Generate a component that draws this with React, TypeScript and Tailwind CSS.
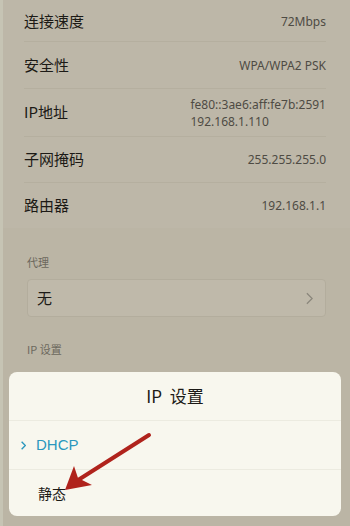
const font = { fontFamily: '"Noto Sans CJK SC", "Noto Sans", sans-serif' };
const latin = { fontFamily: '"Noto Sans", "Noto Sans CJK SC", sans-serif' };

/* ── Info rows ─────────────────────────────────────────────── */
const rows = [
  { label: "连接速度", value: ["72Mbps"], h: "h-[42px]" },
  { label: "安全性", value: ["WPA/WPA2 PSK"], h: "h-[47px]" },
  { label: "IP地址", value: ["fe80::3ae6:aff:fe7b:2591", "192.168.1.110"], h: "h-[48px]" },
  { label: "子网掩码", value: ["255.255.255.0"], h: "h-[46px]" },
  { label: "路由器", value: ["192.168.1.1"], h: "h-[45px]" },
];

function Chevron({ className, width = 1.4 }: { className?: string; width?: number }) {
  return (
    <svg viewBox="0 0 8 14" className={className} fill="none" stroke="currentColor" strokeWidth={width}>
      <path d="M1 1l6 6-6 6" />
    </svg>
  );
}

export default function App() {
  return (
    <div
      className="relative h-[526px] w-[350px] overflow-hidden border-l-[3px] border-[#c6c4b4] bg-[#bbb5a5]"
      style={font}
    >
      {/* info list */}
      <div className="bg-[#bdb7a8] pl-[21px] pr-[24px]">
        {rows.map((r, i) => (
          <div
            key={r.label}
            className={`flex items-center justify-between ${r.h} ${
              i < rows.length - 1 ? "border-b border-[#b5af9f]" : ""
            } ${i === 0 ? "pt-[1px]" : ""}`}
          >
            <span className="text-[15px] text-[#1c1a16]">{r.label}</span>
            <div className="text-right text-[12px] leading-[17px] text-[#4e4b44]" style={latin}>
              {r.value.length > 1 ? (
                r.value.map((v) => (
                  <div key={v} className="text-left">
                    {v}
                  </div>
                ))
              ) : (
                <span>{r.value[0]}</span>
              )}
            </div>
          </div>
        ))}
      </div>

      {/* proxy section */}
      <div className="px-[24px] pt-[26px]">
        <div className="text-[11px] leading-[16px] text-[#6c685d]">代理</div>
        <div className="mt-[9px] flex h-[38px] items-center justify-between rounded-[4px] border border-[#b3ad9d] bg-[#bfb9aa] pl-[9px] pr-[12px]">
          <span className="text-[15px] text-[#1c1a16]">无</span>
          <Chevron className="h-[13px] w-[7px] text-[#8a867b]" />
        </div>
        <div className="mt-[24px] text-[11px] leading-[16px] text-[#6c685d]">IP 设置</div>
      </div>

      {/* bottom sheet */}
      <div className="absolute left-[6px] top-[372px] h-[144px] w-[332px] rounded-[8px] bg-[#f8f7ee]">
        <div className="flex h-[49px] items-center justify-center border-b border-[#ecebe0] text-[17px] text-[#1c1a16]">
          IP&nbsp;&nbsp;设置
        </div>
        <div className="flex h-[49px] items-center border-b border-[#ecebe0] pl-[12px]">
          <Chevron className="h-[9px] w-[5px] text-[#2a97bd]" width={2.2} />
          <span className="ml-[10px] text-[15px] text-[#2a97bd]" style={{ fontFamily: '"Liberation Sans", sans-serif' }}>
            DHCP
          </span>
        </div>
        <div className="flex h-[46px] items-center pl-[29px] text-[14px] text-[#1c1a16]">静态</div>
      </div>

      {/* annotation arrow */}
      <svg className="absolute left-0 top-0" width="350" height="526" viewBox="0 0 350 526">
        <line x1="146" y1="435" x2="72" y2="482" stroke="#b0231c" strokeWidth="4" strokeLinecap="round" />
        <path d="M62 490 L71 466 L75 478 L89 485 Z" fill="#b0231c" />
      </svg>
    </div>
  );
}
